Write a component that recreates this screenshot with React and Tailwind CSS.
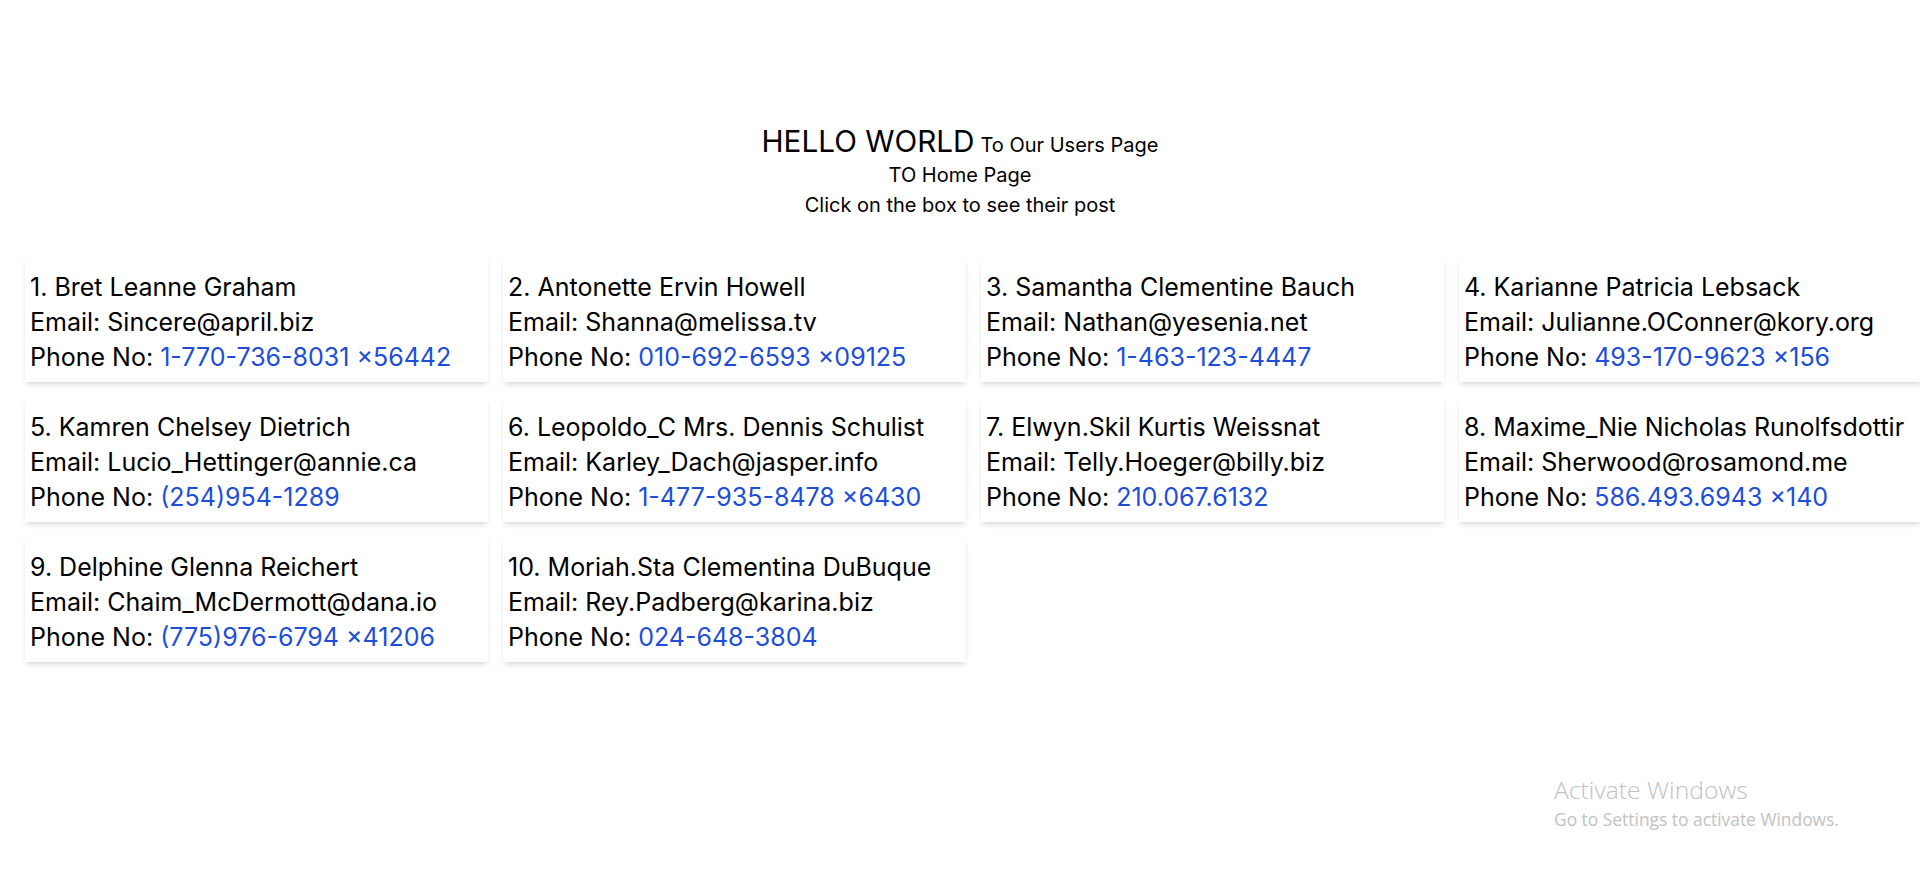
const users = [
  { id: 1, username: "Bret", name: "Leanne Graham", email: "Sincere@april.biz", phone: "1-770-736-8031 x56442" },
  { id: 2, username: "Antonette", name: "Ervin Howell", email: "Shanna@melissa.tv", phone: "010-692-6593 x09125" },
  { id: 3, username: "Samantha", name: "Clementine Bauch", email: "Nathan@yesenia.net", phone: "1-463-123-4447" },
  { id: 4, username: "Karianne", name: "Patricia Lebsack", email: "Julianne.OConner@kory.org", phone: "493-170-9623 x156" },
  { id: 5, username: "Kamren", name: "Chelsey Dietrich", email: "Lucio_Hettinger@annie.ca", phone: "(254)954-1289" },
  { id: 6, username: "Leopoldo_C", name: "Mrs. Dennis Schulist", email: "Karley_Dach@jasper.info", phone: "1-477-935-8478 x6430" },
  { id: 7, username: "Elwyn.Skil", name: "Kurtis Weissnat", email: "Telly.Hoeger@billy.biz", phone: "210.067.6132" },
  { id: 8, username: "Maxime_Nie", name: "Nicholas Runolfsdottir", email: "Sherwood@rosamond.me", phone: "586.493.6943 x140" },
  { id: 9, username: "Delphine", name: "Glenna Reichert", email: "Chaim_McDermott@dana.io", phone: "(775)976-6794 x41206" },
  { id: 10, username: "Moriah.Sta", name: "Clementina DuBuque", email: "Rey.Padberg@karina.biz", phone: "024-648-3804" },
];

export default function App() {
  return (
    <div className="relative min-h-[870px] bg-white text-black" style={{ fontFamily: "Inter, 'Noto Sans', sans-serif" }}>
      <div className="pt-[123px] flex flex-col items-center">
        <div className="flex items-baseline gap-[6px]">
          <span className="text-[29.7px] leading-[36px]">HELLO WORLD</span>
          <span className="text-[20px] leading-[30px]">To Our Users Page</span>
        </div>
        <div className="text-[20px] leading-[30px]">TO Home Page</div>
        <div className="text-[20px] leading-[30px]">Click on the box to see their post</div>
      </div>
      <div className="mt-[37px] ml-[25px] grid grid-cols-[repeat(4,463px)] gap-[15px]">
        {users.map((u) => (
          <div key={u.id} className="bg-white shadow-md pt-[13px] pb-[7px] pl-[5px] text-[25px] leading-[35px] whitespace-nowrap">
            <div>{u.id}. {u.username} {u.name}</div>
            <div>Email: {u.email}</div>
            <div>
              Phone No: <span className="text-[#1d4ed8]">{u.phone.replace(" x", " \u00d7")}</span>
            </div>
          </div>
        ))}
      </div>
      <div className="absolute left-[1554px] top-[774px] text-[#c2c2c2]" style={{ fontFamily: "'Open Sans', 'Noto Sans', sans-serif" }}>
        <div className="text-[24.7px] leading-[32px] font-light">Activate Windows</div>
        <div className="text-[17.4px] leading-[24px] mt-[1px]">Go to Settings to activate Windows.</div>
      </div>
    </div>
  );
}
